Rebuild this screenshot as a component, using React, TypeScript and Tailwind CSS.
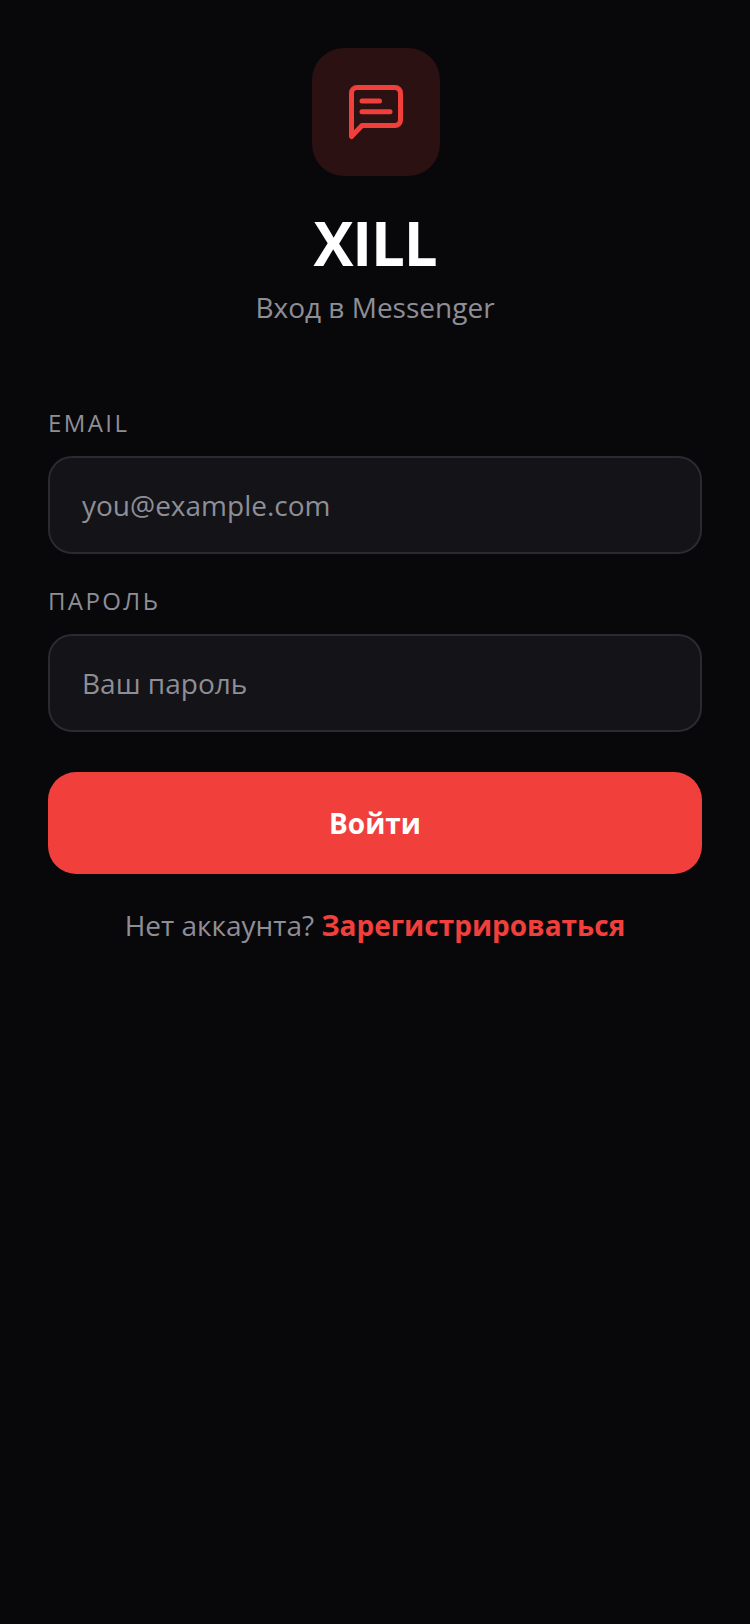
export default function App() {
  return (
    <div className="min-h-[1624px] bg-[#08080b] px-12 pt-12 font-['Open_Sans',sans-serif]">
      {/* Logo + title */}
      <div className="flex flex-col items-center">
        <div className="ml-[2px] flex h-32 w-32 items-center justify-center rounded-[32px] bg-[#2b1112]">
          <svg width="64" height="64" viewBox="0 0 64 64" fill="none" stroke="#f13f3c" strokeWidth="5" strokeLinecap="round" strokeLinejoin="round">
            <path d="M7.500 56.500V13a5.500 5.500 0 0 1 5.500-5.500h38a5.500 5.500 0 0 1 5.500 5.500v27a5.500 5.500 0 0 1-5.500 5.500H18z" />
            <path d="M18 21h17.500" />
            <path d="M18 31.700h28" />
          </svg>
        </div>
        <h1 className="mt-[26px] text-[60px] leading-[82px] font-bold tracking-[-1.200px] text-white">XILL</h1>
        <p className="mt-1 text-[28px] leading-[38px] text-[#8e8e96]">Вход в Messenger</p>
      </div>

      {/* Form */}
      <form className="mt-[81px]">
        <label className="block text-[24px] leading-[32px] tracking-[2.400px] text-[#8e8e96]">EMAIL</label>
        <input
          placeholder="you@example.com"
          className="mt-[17px] block h-[98px] w-full rounded-[24px] border-2 border-[#2a2a31] bg-[#131318] px-8 text-[28px] text-white outline-none placeholder:text-[#8e8e96]"
        />
        <label className="mt-[31px] block text-[24px] leading-[32px] tracking-[2.400px] text-[#8e8e96]">ПАРОЛЬ</label>
        <input
          placeholder="Ваш пароль"
          className="mt-[17px] block h-[98px] w-full rounded-[24px] border-2 border-[#2a2a31] bg-[#131318] px-8 text-[28px] text-white outline-none placeholder:text-[#8e8e96]"
        />
        <button type="button" className="mt-10 block h-[102px] w-full rounded-[28px] bg-[#f13f3c] text-[28px] font-bold text-white">
          Войти
        </button>
      </form>

      <p className="mt-[31px] text-center text-[28px] leading-[40px] text-[#8e8e96]">
        Нет аккаунта? <span className="font-bold text-[#f13f3c]">Зарегистрироваться</span>
      </p>
    </div>
  );
}
